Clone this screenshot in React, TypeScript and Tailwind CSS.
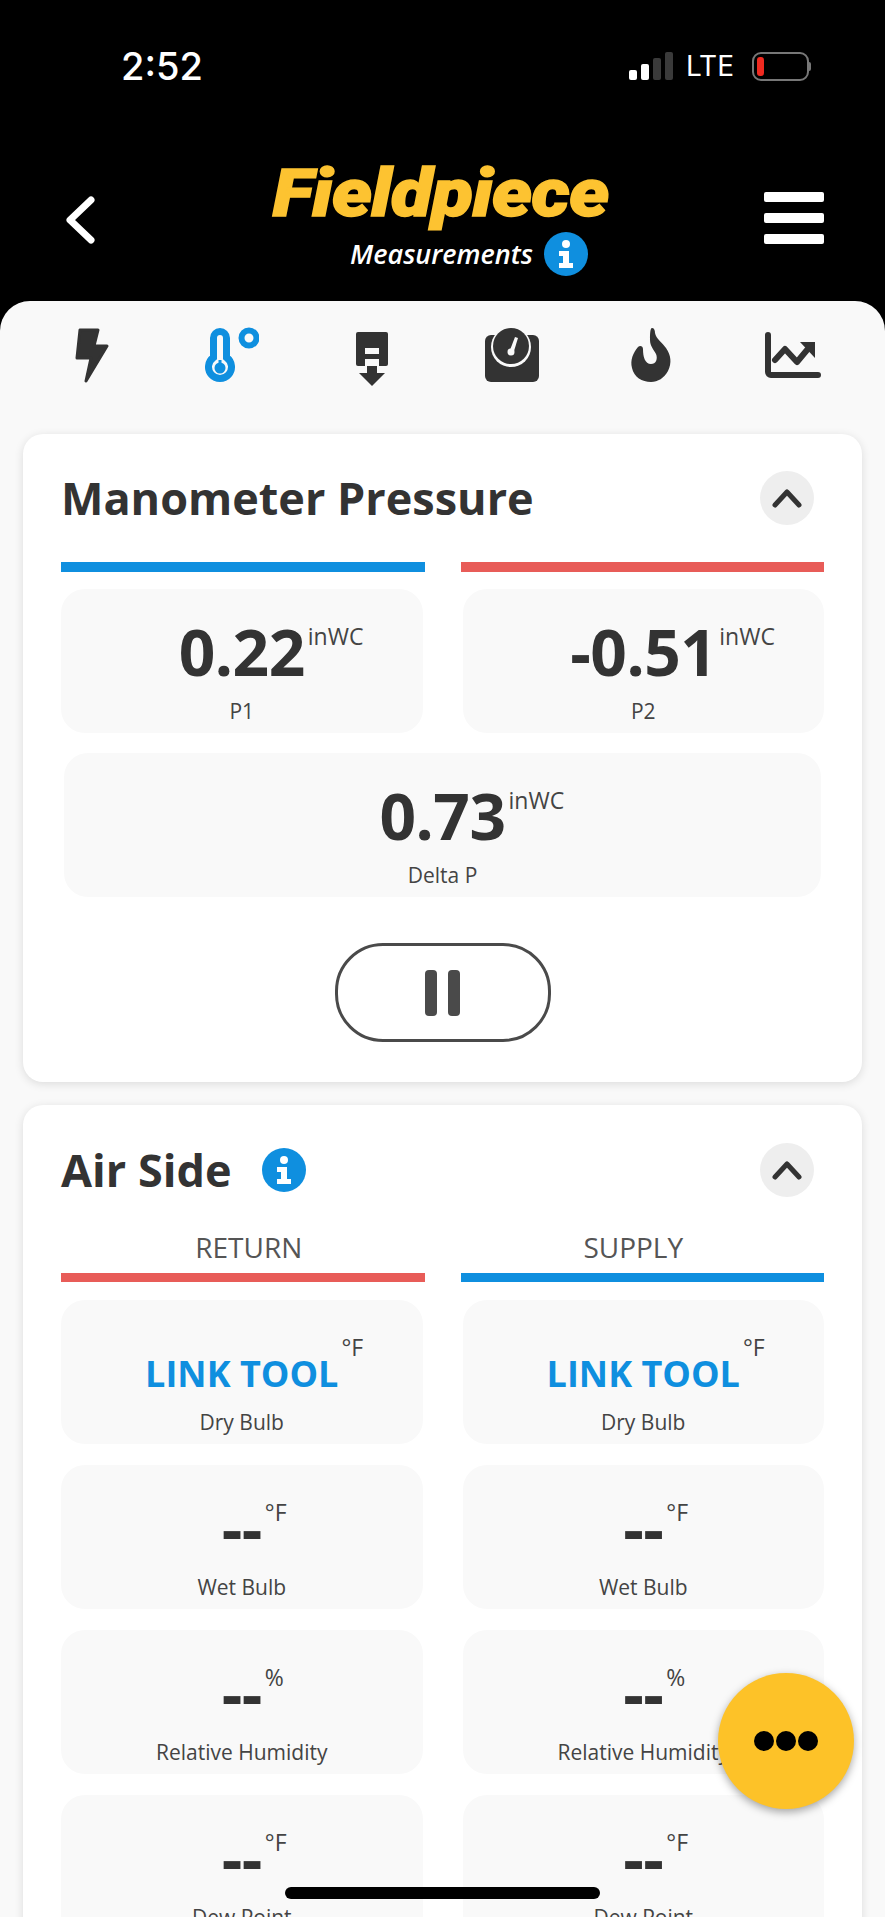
import { FC, ReactNode } from 'react';

const InfoBadge: FC<{ className: string }> = ({ className }) => (
  <svg viewBox="0 0 44 44" className={className}>
    <circle cx="22" cy="22" r="22" fill="#0f8fdf" />
    <circle cx="22" cy="12" r="4" fill="#fff" />
    <path d="M15 19h10v12h4v5H15v-5h4v-7h-4z" fill="#fff" />
  </svg>
);

const Collapse: FC = () => (
  <div className="mr-[10px] flex h-[54px] w-[54px] items-center justify-center rounded-full bg-[#eeeeee]">
    <svg viewBox="0 0 30 20" className="h-[20px] w-[30px]">
      <path d="M3 17 15 4l12 13" fill="none" stroke="#333" strokeWidth="5" strokeLinecap="round" strokeLinejoin="round" />
    </svg>
  </div>
);

const Bolt: FC = () => (
  <svg viewBox="0 0 40 60" className="h-[60px] w-[40px]">
    <path d="M8 3h18l-4 16h13L14 54l5-23H5z" fill="#333" stroke="#333" strokeWidth="3" strokeLinejoin="round" />
  </svg>
);

const Thermo: FC = () => (
  <svg viewBox="0 0 54 56" className="h-[56px] w-[54px]">
    <path d="M8.500 11a6.500 6.500 0 0 1 13 0V30.500a11.500 11.500 0 1 1-13 0z" fill="none" stroke="#0f8fdf" strokeWidth="7" />
    <circle cx="15" cy="41" r="5.500" fill="#0f8fdf" />
    <rect x="13.500" y="33" width="3" height="6" fill="#0f8fdf" />
    <circle cx="44" cy="11" r="7.500" fill="none" stroke="#0f8fdf" strokeWidth="6" />
  </svg>
);

const MeterDown: FC = () => (
  <svg viewBox="0 0 36 60" className="h-[60px] w-[36px]">
    <path d="M4 5h28a2 2 0 0 1 2 2v30a2 2 0 0 1-2 2H4a2 2 0 0 1-2-2V7a2 2 0 0 1 2-2z" fill="#333" />
    <rect x="11" y="21" width="14" height="6" fill="#f9f9f9" />
    <rect x="11" y="32" width="14" height="7" fill="#f9f9f9" />
    <rect x="13" y="39" width="10" height="7" fill="#333" />
    <path d="M5 46h26L18 59z" fill="#333" />
  </svg>
);

const Gauge: FC = () => (
  <svg viewBox="0 0 56 56" className="h-[56px] w-[56px]">
    <rect x="1" y="8" width="54" height="47" rx="6" fill="#333" />
    <circle cx="27" cy="20" r="20" fill="#f9f9f9" />
    <circle cx="27" cy="19" r="18" fill="#333" />
    <path d="M31 10l3 1-4 13-4-1z" fill="#f9f9f9" />
    <circle cx="27" cy="25" r="3.500" fill="#f9f9f9" />
  </svg>
);

const Flame: FC = () => (
  <svg viewBox="0 0 44 56" className="h-[56px] w-[44px]">
    <path
      d="M22 1c2 0 3 2 3 5 1 6 7 9 11 15 5 7 6 15 2 23-4 7-10 11-17 11C12 55 4 50 2 41c-2-8 1-15 6-21 2-2 5-1 5 2 0 8 2 15 8 15 5 0 7-5 5-10-2-4-6-8-6-14 0-5 0-12 2-12z"
      fill="#333"
    />
  </svg>
);

const Trend: FC = () => (
  <svg viewBox="0 0 58 50" className="mt-[3px] h-[50px] w-[58px]">
    <path d="M5 5v37a3 3 0 0 0 3 3h47" fill="none" stroke="#333" strokeWidth="6" strokeLinecap="round" />
    <path d="M12 30l10-11 12 13 10-12" fill="none" stroke="#333" strokeWidth="6" strokeLinecap="round" strokeLinejoin="round" />
    <path d="M37 12h15v16z" fill="#333" />
  </svg>
);

const Tile: FC<{ value: string; unit: string; label: string; link?: boolean; wide?: boolean }> = ({ value, unit, label, link, wide }) => (
  <div className={`flex h-[144px] flex-col items-center overflow-hidden rounded-[24px] bg-[#f9f9f9] pt-[21px] ${wide ? 'mx-[3px]' : ''}`}>
    <span className="relative inline-block text-[64px] leading-[84px] font-bold tracking-[-0.5px] text-[#333]">
      {link ? <span className="text-[36px] leading-[36px] tracking-normal text-[#0f8fdf]">{value}</span> : value}
      <span className="absolute top-[11px] left-full ml-[3px] text-[23px] leading-[30px] font-normal tracking-normal whitespace-nowrap text-[#444]">{unit}</span>
    </span>
    <span className="mt-[4px] text-[21px] leading-[26px] font-normal text-[#444]">{label}</span>
  </div>
);

const Card: FC<{ children: ReactNode; className?: string }> = ({ children, className }) => (
  <section className={`rounded-[20px] bg-white px-[38px] shadow-[0_2px_10px_rgba(0,0,0,0.12)] ${className ?? ''}`}>{children}</section>
);

const airRows = [
  { label: 'Wet Bulb', unit: '°F' },
  { label: 'Relative Humidity', unit: '%' },
  { label: 'Dew Point', unit: '°F' },
];

export default function App() {
  return (
    <div className="relative h-[1917px] w-[885px] overflow-hidden bg-black font-['Open_Sans',sans-serif]">
      <header className="h-[301px] text-white">
        <div className="flex items-center justify-between pt-[42px] pr-[74px] pl-[121px]">
          <span className="font-['Inter',sans-serif] text-[38px] leading-[48px] font-medium">2:52</span>
          <div className="flex items-center">
            <div className="flex items-end gap-[4px]">
              <span className="h-[10px] w-[8px] rounded-[2px] bg-white" />
              <span className="h-[16px] w-[8px] rounded-[2px] bg-white" />
              <span className="h-[22px] w-[8px] rounded-[2px] bg-[#3a3a3a]" />
              <span className="h-[28px] w-[8px] rounded-[2px] bg-[#3a3a3a]" />
            </div>
            <span className="ml-[13px] font-['Inter',sans-serif] text-[28px] leading-[40px] font-normal">LTE</span>
            <div className="ml-[18px] flex items-center">
              <div className="flex h-[29px] w-[57px] items-center rounded-[9px] border-2 border-[#777] px-[3px]">
                <span className="h-[19px] w-[7px] rounded-[3px] bg-[#f02a20]" />
              </div>
              <span className="h-[9px] w-[2px] rounded-r-[2px] bg-[#777]" />
            </div>
          </div>
        </div>
        <div className="mt-[65px] flex items-center justify-between pr-[61px] pl-[64px]">
          <svg viewBox="0 0 32 48" className="mt-[8px] h-[48px] w-[32px]">
            <path d="M27 4 6 24l21 20" fill="none" stroke="#fff" strokeWidth="7" strokeLinecap="round" strokeLinejoin="round" />
          </svg>
          <div className="ml-[22px] flex flex-col items-center">
            <span className="inline-block scale-x-[1.13] font-['Roboto',sans-serif] text-[67px] leading-[76px] font-black tracking-[-0.5px] text-[#fdc331] italic [-webkit-text-stroke:1.500px_#fdc331]">
              Fieldpiece
            </span>
            <div className="mt-[1px] flex items-center gap-[11px] pl-[56px]">
              <span className="text-[27px] leading-[44px] font-semibold text-white italic">Measurements</span>
              <InfoBadge className="h-[44px] w-[44px]" />
            </div>
          </div>
          <div className="mt-[4px] flex w-[60px] flex-col gap-[11px]">
            <span className="h-[10px] rounded-[2px] bg-white" />
            <span className="h-[10px] rounded-[2px] bg-white" />
            <span className="h-[10px] rounded-[2px] bg-white" />
          </div>
        </div>
      </header>

      <main className="rounded-t-[30px] bg-[#f9f9f9] px-[23px]">
        <nav className="ml-[-1px] grid h-[133px] w-[840px] grid-cols-6 items-start pt-[26px]">
          <div className="flex justify-center"><Bolt /></div>
          <div className="flex justify-center"><Thermo /></div>
          <div className="flex justify-center"><MeterDown /></div>
          <div className="flex justify-center"><Gauge /></div>
          <div className="flex justify-center"><Flame /></div>
          <div className="flex justify-center"><Trend /></div>
        </nav>

        <Card className="h-[648px] pt-[37px]">
          <div className="flex items-center justify-between">
            <h2 className="text-[45px] leading-[54px] font-bold text-[#333]">Manometer Pressure</h2>
            <Collapse />
          </div>
          <div className="mt-[37px] grid grid-cols-2 gap-x-[36px]">
            <div className="h-[10px] bg-[#0f8fdf]" />
            <div className="h-[10px] bg-[#e85c58]" />
          </div>
          <div className="mt-[17px] grid grid-cols-2 gap-x-[40px] gap-y-[20px]">
            <Tile value="0.22" unit="inWC" label="P1" />
            <Tile value="-0.51" unit="inWC" label="P2" />
            <div className="col-span-2">
              <Tile value="0.73" unit="inWC" label="Delta P" wide />
            </div>
          </div>
          <div className="mt-[46px] flex justify-center">
            <button className="flex h-[99px] w-[216px] items-center justify-center gap-[11px] rounded-[48px] border-[3px] border-[#4a4a4a] bg-white">
              <span className="h-[46px] w-[12px] rounded-[4px] bg-[#4a4a4a]" />
              <span className="h-[46px] w-[12px] rounded-[4px] bg-[#4a4a4a]" />
            </button>
          </div>
        </Card>

        <Card className="mt-[23px] pt-[38px] pb-[40px]">
          <div className="flex items-center justify-between">
            <div className="flex items-center gap-[30px]">
              <h2 className="text-[45px] leading-[54px] font-bold text-[#333]">Air Side</h2>
              <InfoBadge className="h-[44px] w-[44px]" />
            </div>
            <Collapse />
          </div>
          <div className="mt-[32px] grid grid-cols-2 gap-x-[36px]">
            <div>
              <div className="pl-[12px] text-center text-[28px] leading-[36px] text-[#555]">RETURN</div>
              <div className="mt-[8px] h-[9px] bg-[#e85c58]" />
            </div>
            <div>
              <div className="pr-[18px] text-center text-[28px] leading-[36px] text-[#555]">SUPPLY</div>
              <div className="mt-[8px] h-[9px] bg-[#0f8fdf]" />
            </div>
          </div>
          <div className="mt-[18px] grid grid-cols-2 gap-x-[40px] gap-y-[21px]">
            <Tile value="LINK TOOL" unit="°F" label="Dry Bulb" link />
            <Tile value="LINK TOOL" unit="°F" label="Dry Bulb" link />
            {airRows.map(row => [
              <Tile key={`${row.label}-return`} value="--" unit={row.unit} label={row.label} />,
              <Tile key={`${row.label}-supply`} value="--" unit={row.unit} label={row.label} />,
            ])}
          </div>
        </Card>
      </main>

      <button className="absolute top-[1673px] left-[718px] flex h-[136px] w-[136px] items-center justify-center gap-[2px] rounded-full bg-[#fdc228] shadow-[0_3px_8px_rgba(0,0,0,0.35)]">
        <span className="h-[20px] w-[20px] rounded-full bg-black" />
        <span className="h-[20px] w-[20px] rounded-full bg-black" />
        <span className="h-[20px] w-[20px] rounded-full bg-black" />
      </button>
      <div className="absolute top-[1887px] left-[285px] h-[12px] w-[315px] rounded-full bg-black" />
    </div>
  );
}
